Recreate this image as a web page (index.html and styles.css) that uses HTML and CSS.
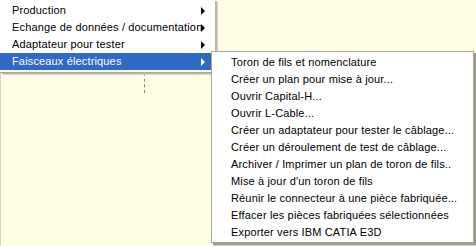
FILE: index.html
```html
<!DOCTYPE html>
<html>
<head>
    <title>Menu</title>
    <link rel="stylesheet" href="styles.css">
</head>
<body>
    <div class="desk">
        <div class="guide"></div>
    </div>

    <ul class="menu main">
        <li>Production<span class="arrow"></span></li>
        <li>Echange de données / documentation<span class="arrow"></span></li>
        <li>Adaptateur pour tester<span class="arrow"></span></li>
        <li class="active">Faisceaux électriques<span class="arrow"></span></li>
    </ul>

    <ul class="menu sub">
        <li>Toron de fils et nomenclature</li>
        <li>Créer un plan pour mise à jour...</li>
        <li>Ouvrir Capital-H...</li>
        <li>Ouvrir L-Cable...</li>
        <li>Créer un adaptateur pour tester le câblage...</li>
        <li>Créer un déroulement de test de câblage...</li>
        <li>Archiver / Imprimer un plan de toron de fils..</li>
        <li>Mise à jour d'un toron de fils</li>
        <li>Réunir le connecteur à une pièce fabriquée...</li>
        <li>Effacer les pièces fabriquées sélectionnées</li>
        <li>Exporter vers IBM CATIA E3D</li>
    </ul>
</body>
</html>
```

FILE: styles.css
```css
html, body {
    margin: 0;
    padding: 0;
    height: 100%;
}

body {
    background-color: #fffde3;
    font-family: "Liberation Sans", Arial, sans-serif;
    font-size: 11px;
    letter-spacing: 0.15px;
    color: #000;
    overflow: hidden;
}

.desk {
    height: 100%;
    border-left: 1px solid #d8d6c4;
}

.guide {
    position: absolute;
    left: 144px;
    top: 73px;
    width: 0;
    height: 20px;
    border-left: 1px dashed #8a8876;
}

.menu {
    list-style: none;
    margin: 0;
    position: absolute;
    background-color: #fff;
    box-sizing: border-box;
}

.menu li {
    height: 17px;
    line-height: 17px;
    white-space: nowrap;
    position: relative;
}

/* main menu, its top edge runs off the page */
.main {
    left: 0;
    top: 0;
    width: 215px;
    padding: 2px 0 2px 0;
    border-bottom: 1px solid #aca899;
    box-shadow: 2px 1px 0 #b9b7a8, 3px 2px 0 #d6d4c2;
}

.main li {
    padding-left: 12px;
    margin-right: 4px;
}

.main li.active {
    background-color: #316ac5;
    color: #fff;
}

.arrow {
    position: absolute;
    right: 6px;
    top: 5px;
    width: 0;
    height: 0;
    border-top: 4px solid transparent;
    border-bottom: 4px solid transparent;
    border-left: 4px solid #000;
}

.active .arrow {
    border-left-color: #fff;
}

/* submenu */
.sub {
    left: 211px;
    top: 51px;
    width: 263px;
    padding: 2px 0 1px 0;
    border: 1px solid #aca899;
    box-shadow: 2px 2px 0 #9d9b8c, 3px 3px 0 #d0cebd;
}

.sub li {
    padding-left: 19px;
}
```
